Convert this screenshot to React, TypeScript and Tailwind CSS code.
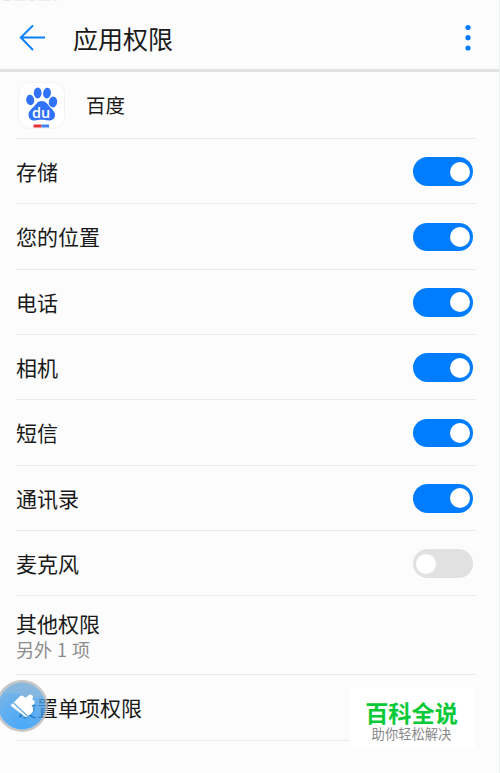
import clsx from "clsx";

const permissions = [
  { name: "存储", enabled: true },
  { name: "您的位置", enabled: true },
  { name: "电话", enabled: true },
  { name: "相机", enabled: true },
  { name: "短信", enabled: true },
  { name: "通讯录", enabled: true },
  { name: "麦克风", enabled: false },
];

function Toggle({ enabled }: { enabled: boolean }) {
  return (
    <button
      type="button"
      role="switch"
      aria-checked={enabled}
      className={clsx(
        "mr-[3.5px] flex h-[28.5px] w-[59.5px] items-center rounded-full px-[3px]",
        enabled ? "justify-end bg-[#007dff]" : "justify-start bg-[#e1e1e1]"
      )}
    >
      <span className="size-5 rounded-full bg-white" />
    </button>
  );
}

function Header() {
  return (
    <header className="flex h-[72px] items-center border-b-[3px] border-[#e2e2e2] pt-[7px] pr-[28px] pl-[19px]">
      <svg width="27" height="28" viewBox="0 0 27 28" fill="none" stroke="#0a80fa" strokeWidth="1.9" className="shrink-0">
        <path d="M14 1.5 1.8 13.5 14 26M1.8 13.5H26" />
      </svg>
      <h1 className="ml-[27px] flex-1 text-[25px] leading-9">应用权限</h1>
      <svg width="8" height="28" viewBox="0 0 8 28" fill="#007dff" className="translate-x-px">
        <circle cx="4" cy="3.5" r="2.6" />
        <circle cx="4" cy="13.7" r="2.6" />
        <circle cx="4" cy="24" r="2.6" />
      </svg>
    </header>
  );
}

function BaiduIcon() {
  return (
    <svg width="47" height="47" viewBox="0 0 47 47" className="ml-[1.5px] shrink-0">
      <rect x="0.5" y="0.5" width="46" height="46" rx="11" fill="#fff" stroke="#f3f3f3" />
      <g fill="#3072fa">
        <ellipse cx="12.2" cy="18" rx="4" ry="5.2" transform="rotate(-8 12.2 18)" />
        <ellipse cx="19.7" cy="11" rx="3.9" ry="5.4" />
        <ellipse cx="29" cy="11.2" rx="3.9" ry="5.4" transform="rotate(8 29 11.2)" />
        <ellipse cx="35" cy="20" rx="4.2" ry="5.4" transform="rotate(8 35 20)" />
        <path d="M23.500 19c4 0 6 3 8 5.500s5.500 4.500 5.500 8.500c0 4-3 5.500-6.500 5.500-3 0-4-.7-7-.7s-4 .7-7 .7c-3.500 0-6-2-6-5.500 0-4 3-6 5.500-8.500s3.500-5.500 7.500-5.500Z" />
      </g>
      <text
        x="23"
        y="36"
        textAnchor="middle"
        fill="#fff"
        fontSize="14.5"
        fontWeight="600"
        fontFamily="Open Sans, sans-serif"
      >
        du
      </text>
      <path d="M15.500 42.500h8v3h-8z" fill="#e53338" />
      <path d="M23.500 42.500H31v3h-7.500z" fill="#3f82f5" />
    </svg>
  );
}

function CleanerBall() {
  return (
    <svg width="54" height="54" viewBox="0 0 54 54" className="absolute top-[679px] left-[-5px]">
      <defs>
        <radialGradient id="ball" cx="50%" cy="95%" r="90%">
          <stop offset="0" stopColor="#1e94f8" />
          <stop offset="0.55" stopColor="#3b9bed" />
          <stop offset="1" stopColor="#5da5df" />
        </radialGradient>
        <clipPath id="ballClip">
          <circle cx="27" cy="27" r="23.5" />
        </clipPath>
      </defs>
      <circle cx="27" cy="27" r="24.6" fill="none" stroke="#bcbcbc" strokeOpacity="0.85" strokeWidth="2.6" />
      <circle cx="27" cy="27" r="23.5" fill="url(#ball)" fillOpacity="0.8" />
      <g clipPath="url(#ballClip)">
        <path d="M2 18C11 13 17 12 25 16C33 21 41 20 51 16V0H2Z" fill="#a3bdd2" fillOpacity="0.35" />
      </g>
      <path
        d="M15.500 26.500L25 17.200Q26.500 16 28 17L30.500 18.800L34.500 15.500Q36.500 15 38 17L37.500 20.500L39.500 22Q40.500 24 38.500 25.500L36.500 26.500Q40 31 36.500 34.500L32.500 37.500Q30.500 38.500 29 37Z"
        fill="#fff"
      />
      <path d="M18.500 24L32.500 37" stroke="#5aa5e5" strokeWidth="1.1" />
    </svg>
  );
}

function Watermark() {
  return (
    <div className="absolute top-[688px] left-[350px] flex h-[60px] w-[125px] flex-col items-center bg-white pt-[9px] pr-[2px]">
      <p className="text-[23.2px] leading-[30px] font-bold text-[#08ca38]">百科全说</p>
      <p className="text-[13.3px] leading-[14px] text-[#888]">助你轻松解决</p>
    </div>
  );
}

export default function App() {
  return (
    <div className="relative h-[773px] w-[500px] overflow-hidden border-r border-[#eaf1f3] bg-[#fcfcfc] font-['Noto_Sans_CJK_SC',sans-serif] text-[#191919]">
      {/* leftover edge of the status bar */}
      <div className="absolute top-0 left-[3px] flex h-px gap-[3px]">
        <span className="w-2 bg-[#e8e8e8]" />
        <span className="w-3 bg-[#eeeeee]" />
        <span className="w-1.5 bg-[#e8e8e8]" />
        <span className="w-3 bg-[#eeeeee]" />
        <span className="w-1 bg-[#eaeaea]" />
      </div>
      <Header />
      <main className="pr-[23px] pl-4">
        <div className="flex h-[67px] items-center border-b border-[#e9e9e9]">
          <BaiduIcon />
          <span className="ml-[21.5px] text-[19.5px]">百度</span>
        </div>
        {permissions.map((permission) => (
          <div
            key={permission.name}
            className="flex h-[65.35px] items-center justify-between border-b border-[#e9e9e9] pt-px"
          >
            <span className="text-[21px]">{permission.name}</span>
            <Toggle enabled={permission.enabled} />
          </div>
        ))}
        <div className="flex h-[79px] flex-col justify-center border-b border-[#e9e9e9] pt-px">
          <span className="text-[21px] leading-[27px]">其他权限</span>
          <span className="text-[18px] leading-[25px] text-[#8c8c8c] [word-spacing:1px]">另外 1 项</span>
        </div>
        <div className="flex h-[65.35px] items-center border-b border-[#e9e9e9] pt-px">
          <span className="text-[21px]">设置单项权限</span>
        </div>
      </main>
      <CleanerBall />
      <Watermark />
    </div>
  );
}
